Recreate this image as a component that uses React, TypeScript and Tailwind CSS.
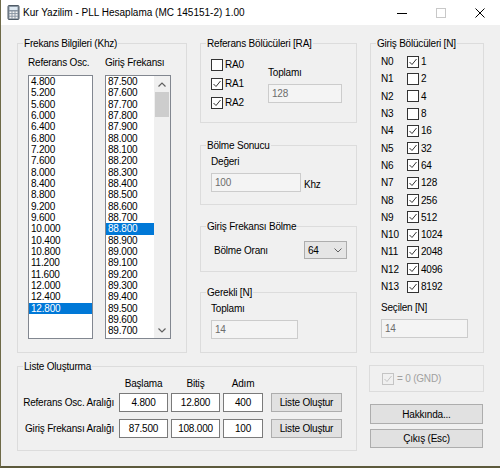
import React from "react";

const refOsc = Array.from({ length: 21 }, (_, i) => (4.8 + i * 0.4).toFixed(3));
const girisFrek = Array.from({ length: 23 }, (_, i) => (87.5 + i * 0.1).toFixed(3));

const nBits: [string, string, boolean][] = [
  ["N0", "1", true],
  ["N1", "2", false],
  ["N2", "4", false],
  ["N3", "8", false],
  ["N4", "16", true],
  ["N5", "32", true],
  ["N6", "64", true],
  ["N7", "128", true],
  ["N8", "256", true],
  ["N9", "512", true],
  ["N10", "1024", true],
  ["N11", "2048", true],
  ["N12", "4096", true],
  ["N13", "8192", true],
];

const GroupBox: React.FC<{ label?: string; className?: string; children?: React.ReactNode }> = ({
  label,
  className,
  children,
}) => (
  <div className={`border border-[#dcdcdc] ${className ?? ""}`}>
    {label && (
      <div className="-mt-[7px] ml-[5px] w-fit bg-[#f0f0f0] px-[1px] h-[13px] leading-[13px] whitespace-nowrap">
        {label}
      </div>
    )}
    {children}
  </div>
);

const Check: React.FC<{ checked?: boolean; disabled?: boolean }> = ({ checked, disabled }) => (
  <span
    className={`w-[12px] h-[12px] shrink-0 border flex items-center justify-center ${
      disabled ? "border-[#c4c4c4] bg-[#f0f0f0]" : "border-[#333333] bg-white"
    }`}
  >
    {checked && (
      <svg width="10" height="10" viewBox="0 0 10 10">
        <path
          d="M1.5 5 L4 7.5 L8.5 2"
          fill="none"
          stroke={disabled ? "#c4c4c4" : "#333333"}
          strokeWidth="1"
        />
      </svg>
    )}
  </span>
);

const ReadBox: React.FC<{ value: string; className?: string }> = ({ value, className }) => (
  <div
    className={`h-[19px] border border-[#cccccc] bg-[#f4f4f4] text-[#6d6d6d] pl-[3px] flex items-center ${className ?? ""}`}
  >
    {value}
  </div>
);

const EditBox: React.FC<{ value: string; className?: string }> = ({ value, className }) => (
  <div
    className={`h-[19px] border border-[#7a7a7a] bg-white flex items-center justify-center ${className ?? ""}`}
  >
    {value}
  </div>
);

const Button: React.FC<{ children: React.ReactNode; className?: string }> = ({ children, className }) => (
  <div
    className={`border border-[#adadad] bg-[#e1e1e1] flex items-center justify-center whitespace-nowrap ${className ?? ""}`}
  >
    {children}
  </div>
);

const ListBox: React.FC<{ items: string[]; selected: string; className?: string; scroll?: boolean }> = ({
  items,
  selected,
  className,
  scroll,
}) => (
  <div className={`h-[264px] border border-[#828790] bg-white flex overflow-hidden ${className ?? ""}`}>
    <div className="flex-1 overflow-hidden">
      {items.map((it) => (
        <div
          key={it}
          className={`h-[11.33px] leading-[11.33px] pl-[2px] ${
            it === selected ? "bg-[#0078d7] text-white" : "text-black"
          }`}
        >
          {it}
        </div>
      ))}
    </div>
    {scroll && (
      <div className="w-[16px] bg-[#f0f0f0] flex flex-col">
        <div className="h-[16px] flex items-center justify-center">
          <svg width="8" height="5" viewBox="0 0 8 5">
            <path d="M0.5 4.5 L4 1 L7.5 4.5" fill="none" stroke="#606060" strokeWidth="1.2" />
          </svg>
        </div>
        <div className="h-[25px] mx-[1px] bg-[#cdcdcd]" />
        <div className="flex-1" />
        <div className="h-[16px] flex items-center justify-center">
          <svg width="8" height="5" viewBox="0 0 8 5">
            <path d="M0.5 0.5 L4 4 L7.5 0.5" fill="none" stroke="#606060" strokeWidth="1.2" />
          </svg>
        </div>
      </div>
    )}
  </div>
);

const CalcIcon = () => (
  <svg width="15" height="15" viewBox="0 0 15 15">
    <rect x="2" y="0.5" width="11" height="14" rx="1" fill="#8a96a3" stroke="#4f5b66" />
    <rect x="3.5" y="2" width="8" height="3" fill="#dfeaf3" />
    {[0, 1, 2].map((r) =>
      [0, 1, 2].map((c) => (
        <rect key={`${r}${c}`} x={3.5 + c * 3} y={6.5 + r * 2.6} width="2" height="1.6" fill="#f4f4f4" />
      ))
    )}
  </svg>
);

export default function App() {
  return (
    <div className="w-[500px] h-[468px] flex flex-col bg-[#f0f0f0] border-l border-b-2 border-l-[#6e6a48] border-b-[#5d5a3c] text-[10px] leading-[13px] tracking-[-0.2px] text-black font-['Liberation_Sans',Arial,sans-serif]">
      {/* title bar */}
      <div className="h-[25px] bg-white flex items-center shrink-0">
        <div className="ml-[4px] w-[16px] flex items-center justify-center">
          <CalcIcon />
        </div>
        <div className="ml-[2px] text-[10px] tracking-normal leading-[14px] flex-1 whitespace-nowrap">
          Kur Yazilim - PLL Hesaplama (MC 145151-2) 1.00
        </div>
        <div className="w-[39px] h-full flex items-center justify-center">
          <svg width="10" height="10" viewBox="0 0 10 10">
            <path d="M0 5.5 H10" stroke="#000" strokeWidth="1" />
          </svg>
        </div>
        <div className="w-[39px] h-full flex items-center justify-center">
          <svg width="10" height="10" viewBox="0 0 10 10">
            <rect x="0.5" y="0.5" width="9" height="9" fill="none" stroke="#c8c8c8" strokeWidth="1" />
          </svg>
        </div>
        <div className="w-[39px] h-full flex items-center justify-center mr-[1px]">
          <svg width="10" height="10" viewBox="0 0 10 10">
            <path d="M0.5 0.5 L9.5 9.5 M9.5 0.5 L0.5 9.5" stroke="#000" strokeWidth="1" />
          </svg>
        </div>
      </div>

      {/* body */}
      <div className="flex-1 pl-[16px] pt-[18px] whitespace-nowrap">
        <div className="flex gap-[13px]">
          {/* Frekans Bilgileri */}
          <GroupBox label="Frekans Bilgileri (Khz)" className="w-[170px] h-[310px]">
            <div className="flex gap-[12px] pl-[10px] mt-[6px]">
              <div className="w-[65px]">
                <div className="h-[13px]">Referans Osc.</div>
                <ListBox items={refOsc} selected="12.800" className="w-[65px] mt-[6px]" />
              </div>
              <div className="w-[66px]">
                <div className="h-[13px]">Giriş Frekansı</div>
                <ListBox items={girisFrek} selected="88.800" className="w-[66px] mt-[6px]" scroll />
              </div>
            </div>
          </GroupBox>

          {/* middle column */}
          <div className="w-[157px] flex flex-col">
            <GroupBox label="Referans Bölücüleri [RA]" className="h-[80px]">
              <div className="flex pl-[10px]">
                <div className="w-[57px] mt-[5px]">
                  {[
                    ["RA0", false],
                    ["RA1", true],
                    ["RA2", true],
                  ].map(([t, c]) => (
                    <div key={t as string} className="h-[19px] flex items-center">
                      <Check checked={c as boolean} />
                      <span className="ml-[2px]">{t as string}</span>
                    </div>
                  ))}
                </div>
                <div className="mt-[16px]">
                  <div className="h-[13px]">Toplamı</div>
                  <ReadBox value="128" className="w-[74px] mt-[5px]" />
                </div>
              </div>
            </GroupBox>

            <GroupBox label="Bölme Sonucu" className="h-[60px] mt-[22px]">
              <div className="pl-[10px] mt-[3px]">
                <div className="h-[13px]">Değeri</div>
                <div className="flex items-center mt-[5px]">
                  <ReadBox value="100" className="w-[90px]" />
                  <span className="ml-[3px] mt-[4px]">Khz</span>
                </div>
              </div>
            </GroupBox>

            <GroupBox label="Giriş Frekansı Bölme" className="h-[46px] mt-[21px]">
              <div className="flex items-center justify-between pl-[13px] pr-[9px] mt-[8px]">
                <span>Bölme Oranı</span>
                <div className="w-[43px] h-[18px] border border-[#adadad] bg-[#e5e5e5] flex items-center justify-between pl-[3px] pr-[4px]">
                  <span>64</span>
                  <svg width="8" height="5" viewBox="0 0 8 5">
                    <path d="M0.5 0.5 L4 4 L7.5 0.5" fill="none" stroke="#606060" strokeWidth="1" />
                  </svg>
                </div>
              </div>
            </GroupBox>

            <GroupBox label="Gerekli [N]" className="h-[61px] mt-[20px]">
              <div className="pl-[10px] mt-[3px]">
                <div className="h-[13px]">Toplamı</div>
                <ReadBox value="14" className="w-[87px] mt-[5px]" />
              </div>
            </GroupBox>
          </div>

          {/* Giriş Bölücüleri */}
          <GroupBox label="Giriş Bölücüleri [N]" className="w-[114px] h-[310px]">
            <div className="pl-[10px] mt-[3px]">
              {nBits.map(([n, v, c]) => (
                <div key={n} className="h-[17.3px] flex items-center">
                  <span className="w-[26px]">{n}</span>
                  <Check checked={c} />
                  <span className="ml-[2px]">{v}</span>
                </div>
              ))}
              <div className="h-[13px] mt-[6px]">Seçilen [N]</div>
              <ReadBox value="14" className="w-[87px] mt-[5px]" />
            </div>
          </GroupBox>
        </div>

        {/* bottom row */}
        <div className="flex gap-[12px] mt-[13px]">
          <GroupBox label="Liste Oluşturma" className="w-[340px] h-[85px]">
            <div className="flex mt-[4px] h-[13px]">
              <div className="w-[101px]" />
              <div className="w-[49px] text-center">Başlama</div>
              <div className="w-[49px] ml-[3px] text-center">Bitiş</div>
              <div className="w-[40px] ml-[3px] text-center">Adım</div>
            </div>
            {[
              ["Referans Osc. Aralığı", "4.800", "12.800", "400"],
              ["Giriş Frekansı Aralığı", "87.500", "108.000", "100"],
            ].map(([label, a, b, c], i) => (
              <div key={label} className={`flex items-center ${i === 0 ? "mt-[3px]" : "mt-[7px]"}`}>
                <div className="w-[96px] text-right">{label}</div>
                <EditBox value={a} className="w-[49px] ml-[5px]" />
                <EditBox value={b} className="w-[49px] ml-[3px]" />
                <EditBox value={c} className="w-[40px] ml-[3px]" />
                <Button className="w-[71px] h-[19px] ml-[8px]">Liste Oluştur</Button>
              </div>
            ))}
          </GroupBox>

          <div className="w-[115px] -mt-[1px] flex flex-col">
            <GroupBox className="h-[27px] flex items-center pl-[12px]">
              <Check checked disabled />
              <span className="ml-[3px] text-[#a0a0a0]">= 0 (GND)</span>
            </GroupBox>
            <Button className="h-[20px] mt-[12px] mx-[1px]">Hakkında...</Button>
            <Button className="h-[19px] mt-[5px] mx-[1px]">Çıkış (Esc)</Button>
          </div>
        </div>
      </div>
    </div>
  );
}
